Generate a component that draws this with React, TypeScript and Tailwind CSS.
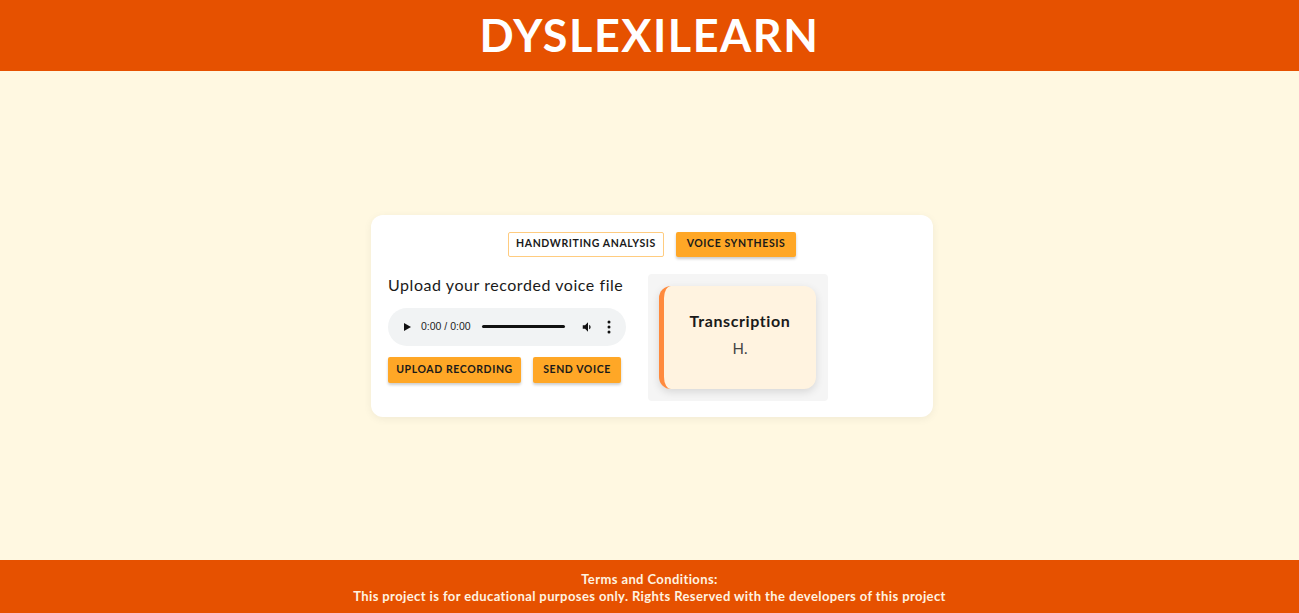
import React from "react";

const font = { fontFamily: 'Lato, "Open Sans", "DejaVu Sans", sans-serif' };

const AudioBar: React.FC = () => (
  <div className="flex h-[38px] w-[238px] items-center rounded-full bg-[#f1f3f4] px-[14px] text-[10.5px] text-[#1f1f1f]" style={{ fontFamily: '"Liberation Sans", Arial, sans-serif' }}>
    <svg width="10" height="10" viewBox="0 0 10 10" className="shrink-0">
      <path d="M2 1 L9 5 L2 9 Z" fill="#111" />
    </svg>
    <span className="ml-[9px] whitespace-nowrap">0:00 / 0:00</span>
    <div className="ml-[11px] h-[3px] w-[83px] rounded-full bg-[#111]" />
    <svg width="14" height="14" viewBox="0 0 24 24" className="ml-[16px] shrink-0">
      <path d="M3 9v6h4l5 5V4L7 9H3zm13.5 3A4.5 4.5 0 0 0 14 7.97v8.05c1.48-.73 2.5-2.25 2.5-4.02z" fill="#111" />
    </svg>
    <svg width="4" height="14" viewBox="0 0 4 14" className="ml-[12px] shrink-0">
      <circle cx="2" cy="2" r="1.5" fill="#111" />
      <circle cx="2" cy="7" r="1.5" fill="#111" />
      <circle cx="2" cy="12" r="1.5" fill="#111" />
    </svg>
  </div>
);

const App: React.FC = () => {
  return (
    <div className="flex min-h-screen flex-col bg-[#fff8e1]" style={font}>
      <header className="flex h-[71px] items-center justify-center bg-[#e65100]">
        <h1 className="text-[45px] font-bold leading-none tracking-[1.5px] text-white">DYSLEXILEARN</h1>
      </header>

      <main className="flex flex-1 items-center justify-center pl-[5px]">
        <div className="w-[562px] rounded-[12px] bg-white px-[17px] pb-[16px] pt-[17px] shadow-[0_2px_8px_rgba(0,0,0,0.06)]">
          <div className="flex justify-center gap-[12px]">
            <button className="h-[25px] w-[156px] whitespace-nowrap rounded-[2px] border border-[#ffcc80] bg-white text-[10.5px] font-bold tracking-[0.6px] text-[#1a1a1a]">
              HANDWRITING ANALYSIS
            </button>
            <button className="h-[25px] w-[120px] whitespace-nowrap rounded-[2px] bg-[#ffa726] text-[10.5px] font-bold tracking-[0.6px] text-[#1a1a1a] shadow-[0_2px_3px_rgba(0,0,0,0.2)]">
              VOICE SYNTHESIS
            </button>
          </div>

          <div className="mt-[17px] flex gap-[22px]">
            <div className="w-[238px] pt-[1px]">
              <h2 className="whitespace-nowrap text-[16px] leading-[20px] tracking-[0.55px] text-[#1a1a1a]">Upload your recorded voice file</h2>
              <div className="mt-[13px]">
                <AudioBar />
              </div>
              <div className="mt-[11px] flex gap-[12px]">
                <button className="h-[26px] w-[133px] whitespace-nowrap rounded-[2px] bg-[#ffa726] text-[10.5px] font-bold tracking-[0.6px] text-[#1a1a1a] shadow-[0_2px_3px_rgba(0,0,0,0.2)]">
                  UPLOAD RECORDING
                </button>
                <button className="h-[26px] w-[88px] whitespace-nowrap rounded-[2px] bg-[#ffa726] text-[10.5px] font-bold tracking-[0.6px] text-[#1a1a1a] shadow-[0_2px_3px_rgba(0,0,0,0.2)]">
                  SEND VOICE
                </button>
              </div>
            </div>

            <div className="h-[127px] w-[180px] rounded-[4px] bg-[#f5f5f5] px-[11px] pt-[12px]">
              <div className="flex h-[103px] w-[157px] flex-col items-center rounded-[12px] border-l-[5px] border-[#ff8a3d] bg-[#fff3e0] pt-[25px] shadow-[0_3px_8px_rgba(0,0,0,0.12)]">
                <h3 className="text-[16px] font-bold leading-[20px] tracking-[0.6px] text-[#1a1a1a]">Transcription</h3>
                <p className="mt-[8px] text-[15px] leading-[18px] text-[#444]">H.</p>
              </div>
            </div>
          </div>
        </div>
      </main>

      <footer className="flex h-[53px] flex-col items-center justify-center bg-[#e65100] pt-[2px] text-[13px] font-bold leading-[17px] tracking-[0.4px] text-[#fff3e0]">
        <p>Terms and Conditions:</p>
        <p>This project is for educational purposes only. Rights Reserved with the developers of this project</p>
      </footer>
    </div>
  );
};

export default App;
